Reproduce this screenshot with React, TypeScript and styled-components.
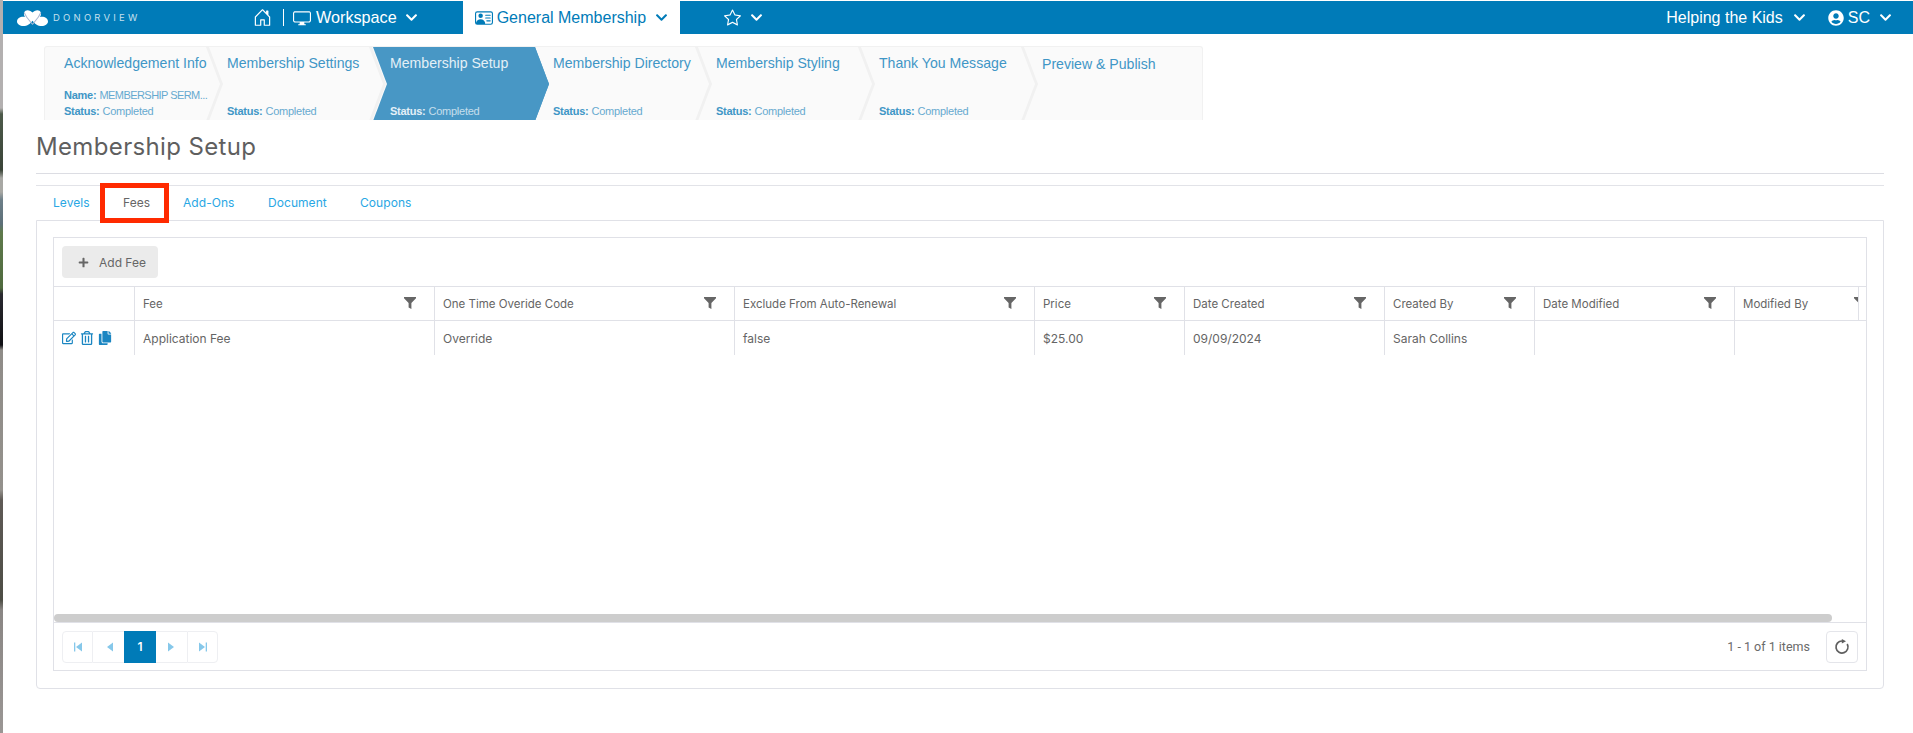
import React from "react";
import styled, { createGlobalStyle } from "styled-components";
import { BsHouseDoor, BsDisplay, BsPersonVcard, BsStar } from "react-icons/bs";
import { FaChevronDown, FaUserCircle, FaRegEdit, FaRegTrashAlt, FaCopy, FaPlus } from "react-icons/fa";

const Global = createGlobalStyle`
  html, body { margin: 0; padding: 0; background: #fff; }
  body { font-family: "Inter", "Liberation Sans", sans-serif; overflow: hidden; }
  * { box-sizing: border-box; }
`;

const Page = styled.div`
  display: flex;
  width: 1913px;
  height: 733px;
  overflow: hidden;
`;

const Edge = styled.div`
  flex: 0 0 3px;
  background: linear-gradient(
    #b3b0b0 0, #b3b0b0 108px, #4d5a4a 114px, #3a4438 170px, #a8a8a4 178px, #a8a8a4 192px,
    #6d7f88 200px, #5c6f78 224px, #5f7a4c 232px, #4f6a3e 288px, #2a2a30 294px, #101014 345px,
    #8f8c88 350px, #94918c 490px, #5f5a56 500px, #4d4d45 600px, #8a8684 610px, #9a9694 733px
  );
`;

const Main = styled.div`
  flex: 1;
  min-width: 0;
  padding-top: 1px;
`;

const Nav = styled.nav`
  display: flex;
  align-items: center;
  height: 33px;
  padding-right: 21px;
  background: #007bb8;
  color: #fff;
  font-family: "Liberation Sans", Arial, sans-serif;
  font-size: 16px;
`;

const Brand = styled.div`
  display: flex;
  align-items: center;
  gap: 5px;
  width: 250px;
  padding-left: 14px;
`;

const BrandName = styled.span`
  font-family: "Inter", sans-serif;
  font-size: 9.5px;
  letter-spacing: 3.2px;
  color: #c5e0ee;
`;

const NavGroup = styled.div<{ $gap?: number; $pad?: number }>`
  display: flex;
  align-items: center;
  gap: ${(p) => p.$gap ?? 5}px;
  padding-left: ${(p) => p.$pad ?? 0}px;
`;

const Divider = styled.span`
  width: 1px;
  height: 17px;
  background: #fff;
  margin: 0 9px 0 11px;
`;

const WorkspaceLabel = styled.span`
  font-size: 16.2px;
`;

const ActiveTab = styled.div`
  display: flex;
  align-items: center;
  gap: 4px;
  width: 217px;
  height: 33px;
  margin-left: 45px;
  padding-left: 12px;
  background: #fff;
  color: #007bb8;
`;

const Chevron = styled(FaChevronDown)<{ $left?: number }>`
  font-size: 13px;
  margin-left: ${(p) => p.$left ?? 0}px;
`;

const NavSpacer = styled.div`
  flex: 1;
`;

const Stepper = styled.div`
  display: flex;
  width: 1159px;
  height: 74px;
  margin: 12px 0 0 41px;
  background: #fafafa;
  border: 1px solid #f1f1f1;
  border-bottom: 0;
  border-radius: 3px 3px 0 0;
  overflow: hidden;
  font-family: "Liberation Sans", Arial, sans-serif;
`;

const Step = styled.div<{ $active?: boolean; $last?: boolean }>`
  position: relative;
  flex: 0 0 163px;
  min-width: 0;
  height: 100%;
  padding: ${(p) => (p.$last ? 8 : 7)}px 0 0 19px;
  color: ${(p) => (p.$active ? "#e4f0f7" : "#3f96c6")};
  z-index: ${(p) => (p.$active ? 2 : 1)};

  ${(p) =>
    p.$last
      ? ""
      : `
    &::before, &::after {
      content: "";
      position: absolute;
      left: 9px;
      width: 159px;
      height: 37px;
      background: ${p.$active ? "#4897c5" : "transparent"};
      border-right: 3px solid ${p.$active ? "#4897c5" : "#f1f1f1"};
      z-index: -1;
    }
    &::before { top: 0; transform: skewX(20.7deg); }
    &::after { top: 37px; transform: skewX(-20.7deg); }
  `}
`;

const StepTitle = styled.div`
  font-size: 14.1px;
  line-height: 18px;
  white-space: nowrap;
`;

const StepMeta = styled.div<{ $top?: number }>`
  display: flex;
  align-items: baseline;
  gap: 3px;
  margin-top: ${(p) => p.$top ?? 0}px;
  font-size: 11px;
  line-height: 13px;
  letter-spacing: -0.25px;
  white-space: nowrap;
`;

const MetaLabel = styled.b`
  font-weight: 700;
`;

const MetaValue = styled.span<{ $tight?: boolean }>`
  font-weight: 400;
  opacity: 0.8;
  letter-spacing: ${(p) => (p.$tight ? "-0.55px" : "inherit")};
`;

const Content = styled.div`
  padding: 0 29px 0 33px;
`;

const Title = styled.h1`
  margin: 0;
  height: 54px;
  line-height: 53px;
  font-size: 24px;
  font-weight: 400;
  letter-spacing: 0.35px;
  color: #5f5f5f;
  border-bottom: 1px solid #dcdde3;
`;

const Tabs = styled.div`
  position: relative;
  display: flex;
  height: 35px;
  margin-top: 11px;
  border-top: 1px solid #e2e3e8;
  font-size: 12px;
`;

const Tab = styled.div<{ $active?: boolean; $width: number; $pad?: number }>`
  flex: 0 0 ${(p) => p.$width}px;
  padding-left: ${(p) => p.$pad ?? 0}px;
  line-height: 34px;
  letter-spacing: 0.06px;
  color: ${(p) => (p.$active ? "#666" : "#29a7e4")};
`;

const Highlight = styled.div`
  position: absolute;
  left: 64px;
  top: -3px;
  width: 69px;
  height: 40px;
  border: 5px solid #ff2a00;
`;

const Panel = styled.div`
  height: 469px;
  padding: 16px;
  border: 1px solid #e0e1e7;
  border-radius: 0 0 4px 4px;
`;

const Grid = styled.div`
  display: flex;
  flex-direction: column;
  height: 434px;
  border: 1px solid #e0e1e7;
  overflow: hidden;
  font-size: 12px;
  color: #656565;
`;

const Toolbar = styled.div`
  flex: 0 0 48px;
  padding: 8px;
`;

const AddButton = styled.div`
  display: flex;
  align-items: center;
  gap: 10px;
  width: 96px;
  height: 32px;
  padding-left: 16px;
  background: #ebebeb;
  border-radius: 4px;
  color: #666;
`;

const HeaderRow = styled.div`
  display: flex;
  flex: 0 0 35px;
  overflow: hidden;
  font-size: 11.5px;
  border-top: 1px solid #e0e1e7;
  border-bottom: 1px solid #e0e1e7;
`;

const DataRow = styled.div`
  display: flex;
  flex: 0 0 34px;
  overflow: hidden;
`;

const HeaderClip = styled.div`
  display: flex;
  flex: 0 0 1805px;
  overflow: hidden;
  border-right: 1px solid #e0e1e7;
`;

const Cell = styled.div<{ $width: number }>`
  position: relative;
  display: flex;
  align-items: center;
  flex: 0 0 ${(p) => p.$width}px;
  padding-left: 8px;
  border-right: 1px solid #e0e1e7;
  white-space: nowrap;
`;

const FilterMark = styled.svg`
  position: absolute;
  right: 18px;
  top: 10px;
  width: 12px;
  height: 12px;
  color: #666;
`;

const Actions = styled.div`
  display: flex;
  align-items: center;
  gap: 4px;
  color: #1b86c2;
  font-size: 14px;
`;

const Filler = styled.div`
  flex: 1;
`;

const ScrollTrack = styled.div`
  flex: 0 0 8px;
  padding-right: 34px;
`;

const ScrollThumb = styled.div`
  height: 8px;
  background: #cdcdcd;
  border-radius: 4px;
`;

const Footer = styled.div`
  display: flex;
  align-items: center;
  justify-content: space-between;
  flex: 0 0 48px;
  padding: 0 8px;
  border-top: 1px solid #e0e1e7;
`;

const Pager = styled.div`
  display: flex;
  height: 32px;
`;

const PageButton = styled.div<{ $active?: boolean; $width?: number; $sepLeft?: boolean; $sepRight?: boolean }>`
  display: flex;
  align-items: center;
  justify-content: center;
  width: ${(p) => p.$width ?? 31}px;
  background: ${(p) => (p.$active ? "#007bb8" : "#fff")};
  color: ${(p) => (p.$active ? "#fff" : "#86c8ea")};
  font-weight: 600;
  border-top: 1px solid ${(p) => (p.$active ? "#007bb8" : "#eeeff2")};
  border-bottom: 1px solid ${(p) => (p.$active ? "#007bb8" : "#eeeff2")};
  ${(p) => (p.$sepLeft ? "border-left: 1px solid #eeeff2;" : "")}
  ${(p) => (p.$sepRight ? "border-right: 1px solid #eeeff2;" : "")}
  &:first-child {
    border-left: 1px solid #eeeff2;
    border-radius: 4px 0 0 4px;
  }
  &:last-child {
    border-right: 1px solid #eeeff2;
    border-radius: 0 4px 4px 0;
  }
`;

const Info = styled.div`
  display: flex;
  align-items: center;
  gap: 16px;
  font-family: "Roboto", sans-serif;
  font-size: 12.5px;
  color: #6a6a6a;
`;

const Refresh = styled.div`
  display: flex;
  align-items: center;
  justify-content: center;
  width: 32px;
  height: 32px;
  border: 1px solid #e4e5ea;
  border-radius: 4px;
  color: #5f5f5f;
`;

const Logo = () => (
  <svg width="31" height="17" viewBox="0 0 30 19" preserveAspectRatio="none" aria-hidden="true">
    <path d="M15 4C13 1 8 0 7 4c-1 3 1 5 1 5C4 8 0 10 0 14c0 3 3 5 6 5 4 0 7-3 9-6 2 3 5 6 9 6 3 0 6-2 6-5 0-4-4-6-8-5 0 0 2-2 1-5-1-4-6-3-8 0z" fill="#fff" />
    <path d="M7 4c2 6 5 9 8 13 3-4 6-7 8-13" fill="none" stroke="#a9b6d2" strokeWidth="1.1" />
  </svg>
);

const FilterIcon = () => (
  <FilterMark viewBox="0 0 12 12" fill="currentColor" aria-hidden="true">
    <path d="M0 0h12v1.2L7.4 6v6L4.6 10.4V6L0 1.2z" />
  </FilterMark>
);

const PagerIcon = ({ dir, bar }: { dir: "l" | "r"; bar?: boolean }) => (
  <svg width="10" height="10" viewBox="0 0 10 10" fill="currentColor" aria-hidden="true">
    {dir === "l" ? (
      <>
        <path d="M9 0.5v9L3 5z" />
        {bar && <rect x="1" y="0.5" width="1.3" height="9" />}
      </>
    ) : (
      <>
        <path d="M1 0.5v9L7 5z" />
        {bar && <rect x="7.7" y="0.5" width="1.3" height="9" />}
      </>
    )}
  </svg>
);

const ReloadIcon = () => (
  <svg width="16" height="16" viewBox="0 0 16 16" fill="none" aria-hidden="true">
    <path d="M13.2 5A6 6 0 1 1 8 2" stroke="currentColor" strokeWidth="1.7" />
    <path d="M7.8 0l4.2 2.2-4.2 2.4z" fill="currentColor" />
  </svg>
);

const columns = [
  { title: "Fee", width: 300, value: "Application Fee" },
  { title: "One Time Overide Code", width: 300, value: "Override" },
  { title: "Exclude From Auto-Renewal", width: 300, value: "false" },
  { title: "Price", width: 150, value: "$25.00" },
  { title: "Date Created", width: 200, value: "09/09/2024" },
  { title: "Created By", width: 150, value: "Sarah Collins" },
  { title: "Date Modified", width: 200, value: "" },
  { title: "Modified By", width: 150, value: "" },
];

const steps = [
  { title: "Acknowledgement Info", name: "MEMBERSHIP SERM...", status: true },
  { title: "Membership Settings", status: true },
  { title: "Membership Setup", status: true, active: true },
  { title: "Membership Directory", status: true },
  { title: "Membership Styling", status: true },
  { title: "Thank You Message", status: true },
  { title: "Preview & Publish", status: false, last: true },
];

const tabs = [
  { label: "Levels", width: 87, pad: 17 },
  { label: "Fees", width: 60, active: true },
  { label: "Add-Ons", width: 85 },
  { label: "Document", width: 92 },
  { label: "Coupons", width: 80 },
];

export default function App() {
  return (
    <Page>
      <Global />
      <Edge />
      <Main>
        <Nav>
          <Brand>
            <Logo />
            <BrandName>DONORVIEW</BrandName>
          </Brand>
          <NavGroup $gap={0}>
            <BsHouseDoor size={19} />
            <Divider />
            <NavGroup>
              <BsDisplay size={18} />
              <WorkspaceLabel>Workspace</WorkspaceLabel>
              <Chevron $left={3} />
            </NavGroup>
          </NavGroup>
          <ActiveTab>
            <BsPersonVcard size={18} />
            <span>General Membership</span>
            <Chevron $left={5} />
          </ActiveTab>
          <NavGroup $gap={9} $pad={44}>
            <BsStar size={17} />
            <Chevron />
          </NavGroup>
          <NavSpacer />
          <NavGroup $gap={10}>
            <span>Helping the Kids</span>
            <Chevron />
          </NavGroup>
          <NavGroup $gap={4} $pad={22}>
            <FaUserCircle size={16} />
            <span>SC</span>
            <Chevron $left={5} />
          </NavGroup>
        </Nav>
        <Stepper>
          {steps.map((s) => (
            <Step key={s.title} $active={s.active} $last={s.last}>
              <StepTitle>{s.title}</StepTitle>
              {s.name ? (
                <StepMeta $top={17}>
                  <MetaLabel>Name:</MetaLabel>
                  <MetaValue $tight>{s.name}</MetaValue>
                </StepMeta>
              ) : null}
              {s.status ? (
                <StepMeta $top={s.name ? 3 : 33}>
                  <MetaLabel>Status:</MetaLabel>
                  <MetaValue>Completed</MetaValue>
                </StepMeta>
              ) : null}
            </Step>
          ))}
        </Stepper>
        <Content>
          <Title>Membership Setup</Title>
          <Tabs>
            {tabs.map((t) => (
              <Tab key={t.label} $active={t.active} $width={t.width} $pad={t.pad}>
                {t.label}
              </Tab>
            ))}
            <Highlight />
          </Tabs>
          <Panel>
            <Grid>
              <Toolbar>
                <AddButton>
                  <FaPlus size={11} />
                  <span>Add Fee</span>
                </AddButton>
              </Toolbar>
              <HeaderRow>
                <HeaderClip>
                  <Cell $width={81} />
                  {columns.map((c) => (
                    <Cell key={c.title} $width={c.width}>
                      {c.title}
                      <FilterIcon />
                    </Cell>
                  ))}
                </HeaderClip>
              </HeaderRow>
              <DataRow>
                <Cell $width={81}>
                  <Actions>
                    <FaRegEdit />
                    <FaRegTrashAlt />
                    <FaCopy />
                  </Actions>
                </Cell>
                {columns.map((c) => (
                  <Cell key={c.title} $width={c.width}>
                    {c.value}
                  </Cell>
                ))}
              </DataRow>
              <Filler />
              <ScrollTrack>
                <ScrollThumb />
              </ScrollTrack>
              <Footer>
                <Pager>
                  <PageButton $sepRight><PagerIcon dir="l" bar /></PageButton>
                  <PageButton><PagerIcon dir="l" /></PageButton>
                  <PageButton $active $width={32}>1</PageButton>
                  <PageButton><PagerIcon dir="r" /></PageButton>
                  <PageButton $sepLeft><PagerIcon dir="r" bar /></PageButton>
                </Pager>
                <Info>
                  <span>1 - 1 of 1 items</span>
                  <Refresh><ReloadIcon /></Refresh>
                </Info>
              </Footer>
            </Grid>
          </Panel>
        </Content>
      </Main>
    </Page>
  );
}
